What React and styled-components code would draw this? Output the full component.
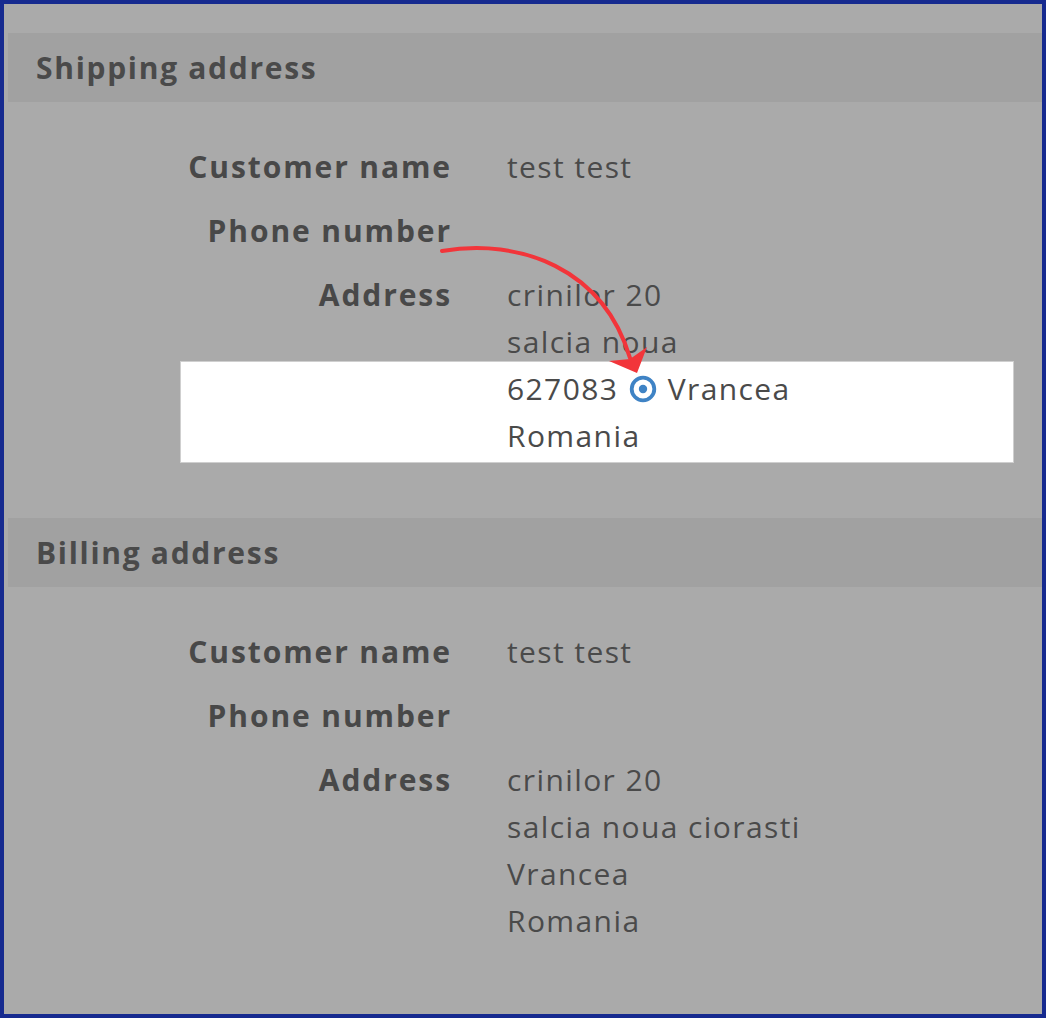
import React from 'react';
import styled, { createGlobalStyle } from 'styled-components';

const GlobalStyle = createGlobalStyle`
  html, body {
    margin: 0;
    padding: 0;
    background: #aaaaaa;
  }
  * {
    box-sizing: border-box;
  }
`;

const shipping = {
  title: 'Shipping address',
  name: 'test test',
  phone: '',
  lines: ['crinilor 20', 'salcia noua'],
  highlighted: true,
};

const billing = {
  title: 'Billing address',
  name: 'test test',
  phone: '',
  lines: ['crinilor 20', 'salcia noua ciorasti', 'Vrancea', 'Romania'],
};

function LocationIcon() {
  return (
    <IconWrap viewBox="0 0 30 30" width="30" height="30">
      <circle cx="15" cy="15" r="11.3" fill="none" stroke="#3f83c5" strokeWidth="3.8" />
      <circle cx="15" cy="15" r="4.2" fill="#3f83c5" />
    </IconWrap>
  );
}

function AddressSection({ data, spaced }) {
  return (
    <Section $spaced={spaced}>
      <SectionHeader>{data.title}</SectionHeader>
      <Rows>
        <Row>
          <Label>Customer name</Label>
          <Value>{data.name}</Value>
        </Row>
        <Row>
          <Label>Phone number</Label>
          <Value>{data.phone}</Value>
        </Row>
        <Row>
          <Label>Address</Label>
          <Value>
            {data.lines.map((line) => (
              <Line key={line}>{line}</Line>
            ))}
            {data.highlighted && (
              <Highlight>
                <Line>
                  627083 <LocationIcon /> Vrancea
                </Line>
                <Line>Romania</Line>
              </Highlight>
            )}
          </Value>
        </Row>
      </Rows>
    </Section>
  );
}

export default function App() {
  return (
    <>
      <GlobalStyle />
      <Frame>
        <AddressSection data={shipping} />
        <AddressSection data={billing} spaced />
        <Arrow viewBox="0 0 1046 1018" width="1046" height="1018">
          <path
            d="M442 251 C 520 238, 603 268, 630 358"
            fill="none"
            stroke="#f2353a"
            strokeWidth="4"
            strokeLinecap="round"
          />
          <polygon points="637,373 609,361 630,359 647,347" fill="#f2353a" />
        </Arrow>
      </Frame>
    </>
  );
}

const Frame = styled.div`
  position: relative;
  width: 1046px;
  height: 1018px;
  border: 4px solid #162a8f;
  background: #aaaaaa;
  padding-top: 29px;
  font-family: 'Open Sans', 'Noto Sans', sans-serif;
  overflow: hidden;
`;

const Section = styled.section`
  margin-top: ${(p) => (p.$spaced ? '55px' : '0')};
`;

const SectionHeader = styled.h2`
  margin: 0 0 0 4px;
  height: 69px;
  display: flex;
  align-items: center;
  padding-left: 28px;
  background: #a1a1a1;
  color: #4a4a4a;
  font-size: 30px;
  font-weight: 700;
  letter-spacing: 1.7px;
`;

const Rows = styled.div`
  display: flex;
  flex-direction: column;
  gap: 17px;
  padding-top: 41px;
`;

const Row = styled.div`
  display: grid;
  grid-template-columns: 446px 1fr;
  column-gap: 57px;
  font-size: 30px;
  line-height: 47px;
  min-height: 47px;
`;

const Label = styled.div`
  text-align: right;
  font-weight: 700;
  color: #484848;
  letter-spacing: 1.9px;
  margin-right: -2px;
`;

const Value = styled.div`
  color: #4a4a4a;
  display: flex;
  flex-direction: column;
  letter-spacing: 1.4px;
`;

const Line = styled.div`
  display: flex;
  align-items: center;
  white-space: pre;
`;

const Highlight = styled.div`
  margin: -4px 28px 0 -327px;
  padding: 3px 0 3px 326px;
  background: #ffffff;
  border: 1px solid #cfcfcf;
`;

const IconWrap = styled.svg`
  display: block;
  margin: 0 1px 0 0;
`;

const Arrow = styled.svg`
  position: absolute;
  top: -4px;
  left: -4px;
  pointer-events: none;
`;
